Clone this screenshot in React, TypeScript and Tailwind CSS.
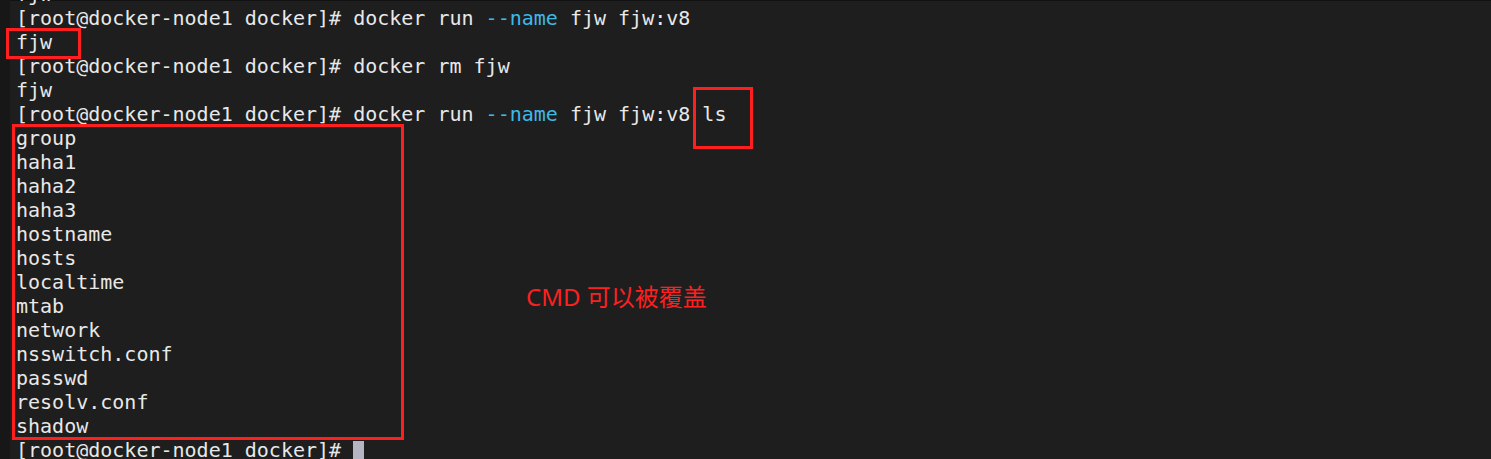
import React from 'react';

const prompt = '[root@docker-node1 docker]# ';

// terminal output, one entry per row
const rows: React.ReactNode[] = [
  'fjw',
  <>
    {prompt}docker run <span className="text-[#3fb8e8]">--name</span> fjw fjw:v8
  </>,
  'fjw',
  <>{prompt}docker rm fjw</>,
  'fjw',
  <>
    {prompt}docker run <span className="text-[#3fb8e8]">--name</span> fjw fjw:v8 ls
  </>,
  'group',
  'haha1',
  'haha2',
  'haha3',
  'hostname',
  'hosts',
  'localtime',
  'mtab',
  'network',
  'nsswitch.conf',
  'passwd',
  'resolv.conf',
  'shadow',
];

export default function App() {
  return (
    <div className="relative w-[1491px] h-[459px] overflow-hidden bg-[#1e1e1e] flex">
      <div className="w-[10px] shrink-0 bg-[#171717]" />
      <div className="flex-1 border-t border-[#121212]">
        <div
          className="-mt-[19px] pl-[6px] text-[20px] leading-[24px] text-[#e8e8e8] whitespace-pre"
          style={{ fontFamily: '"DejaVu Sans Mono", monospace' }}
        >
          {rows.map((row, i) => (
            <div key={i} className="h-[24px]">
              {row}
            </div>
          ))}
          <div className="h-[24px] flex items-end">
            <span>{prompt}</span>
            <span className="inline-block w-[11px] h-[21px] bg-[#b4b4c2]" />
          </div>
        </div>
      </div>

      {/* annotations */}
      <div className="absolute left-[6px] top-[28px] w-[75px] h-[31px] border-[3px] border-[#ff1f1f]" />
      <div className="absolute left-[693px] top-[87px] w-[60px] h-[62px] border-[3px] border-[#ff1f1f]" />
      <div className="absolute left-[12px] top-[124px] w-[392px] h-[316px] border-[3px] border-[#ff1f1f]" />
      <div
        className="absolute left-[526px] top-[281px] text-[24px] leading-[32px] text-[#ff1f1f]"
        style={{ fontFamily: '"Noto Sans", "Noto Sans CJK SC", sans-serif' }}
      >
        CMD 可以被覆盖
      </div>
    </div>
  );
}
